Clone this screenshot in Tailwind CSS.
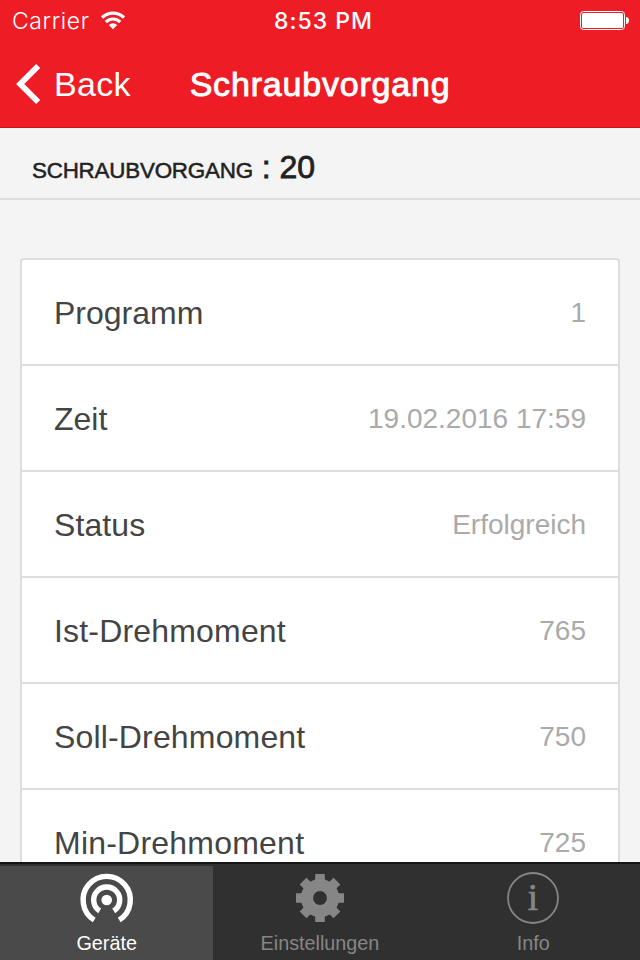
<!DOCTYPE html>
<html lang="de">
  <head>
    <meta charset="UTF-8" />
    <meta name="viewport" content="width=device-width, initial-scale=1.0" />
    <title>Schraubvorgang</title>
    <script src="https://cdn.jsdelivr.net/npm/@tailwindcss/browser@4"></script>
  </head>

  <body class="bg-[#f4f4f4] font-['Liberation_Sans',Arial,sans-serif]">
    <div class="flex flex-col w-[640px] h-[960px] overflow-hidden">
      <!-- Header -->
      <header class="h-32 shrink-0 bg-[#ee1c25] border-b border-[#c9151d] text-white">
        <!-- Status bar -->
        <div class="grid grid-cols-[213px_214px_1fr] items-center h-10 pr-[11px] font-['Inter',sans-serif] text-[23px]">
          <div class="flex items-center gap-[11px] pl-3">
            <span class="pt-0.5 font-light tracking-[0.6px]">Carrier</span>
            <svg class="w-6 h-5" viewBox="0 0 24 20" fill="none" stroke="currentColor" stroke-width="3.2">
              <path d="M1 7.5a15.8 15.8 0 0 1 22 0" />
              <path d="M4.8 12a10.2 10.2 0 0 1 14.4 0" />
              <path d="M12 19.2l-4.2-4.2a6.2 6.2 0 0 1 8.4 0z" fill="currentColor" stroke="none" />
            </svg>
          </div>
          <span class="pt-0.5 pl-[7px] text-center font-medium tracking-[1px] whitespace-nowrap">8:53 PM</span>
          <svg class="justify-self-end w-[49px] h-5" viewBox="0 0 49 20">
            <rect x="0.5" y="1.5" width="44" height="18" rx="3" fill="none" stroke="currentColor" />
            <rect x="2" y="3" width="41" height="15" rx="1.5" fill="currentColor" />
            <path d="M46 7c4 0 4 7 0 7z" fill="currentColor" />
          </svg>
        </div>
        <!-- Nav bar -->
        <div class="grid grid-cols-[160px_320px_160px] items-center h-[88px]">
          <a href="#" class="flex items-center pl-4">
            <svg class="w-[26px] h-10" viewBox="0 0 26 40" fill="none" stroke="currentColor" stroke-width="5.8">
              <path d="M22.2 2L4.2 20l18 18" />
            </svg>
            <span class="ml-3 text-[34px] leading-10 tracking-[0.3px]">Back</span>
          </a>
          <h1 class="text-center text-[34px] leading-10 tracking-[0.8px] whitespace-nowrap [-webkit-text-stroke:0.9px]">Schraubvorgang</h1>
        </div>
      </header>

      <!-- Heading -->
      <div class="h-[72px] shrink-0 pl-8 pt-[19px] border-b-2 border-[#dddddd] text-[#222222]">
        <h2 class="text-[32px] leading-10 whitespace-nowrap [-webkit-text-stroke:0.8px]"><span class="text-[22.4px] tracking-[-0.22px] [-webkit-text-stroke:0.5px]">SCHRAUBVORGANG</span> : 20</h2>
      </div>

      <!-- Details -->
      <main class="flex-1 min-h-0 overflow-hidden px-5 pt-[58px]">
        <ul class="bg-white border-2 border-[#dddddd] rounded divide-y-2 divide-[#dddddd] text-[32px] text-[#444444]">
          <li class="flex items-center justify-between h-[106px] px-8">
            <span class="pt-0.5">Programm</span>
            <span class="pt-0.5 text-[28px] text-[#aaaaaa]">1</span>
          </li>
          <li class="flex items-center justify-between h-[106px] px-8">
            <span class="pt-0.5">Zeit</span>
            <span class="pt-0.5 text-[28px] text-[#aaaaaa]">19.02.2016 17:59</span>
          </li>
          <li class="flex items-center justify-between h-[106px] px-8">
            <span class="pt-0.5 tracking-[0.1px]">Status</span>
            <span class="pt-0.5 text-[28px] text-[#aaaaaa]">Erfolgreich</span>
          </li>
          <li class="flex items-center justify-between h-[106px] px-8">
            <span class="pt-0.5 tracking-[0.18px]">Ist-Drehmoment</span>
            <span class="pt-0.5 text-[28px] text-[#aaaaaa]">765</span>
          </li>
          <li class="flex items-center justify-between h-[106px] px-8">
            <span class="pt-0.5 tracking-[0.16px]">Soll-Drehmoment</span>
            <span class="pt-0.5 text-[28px] text-[#aaaaaa]">750</span>
          </li>
          <li class="flex items-center justify-between h-[104px] px-8">
            <span class="pt-0.5 tracking-[0.22px]">Min-Drehmoment</span>
            <span class="pt-0.5 text-[28px] text-[#aaaaaa]">725</span>
          </li>
        </ul>
      </main>

      <!-- Tabs -->
      <nav class="grid grid-cols-3 h-[98px] shrink-0 pt-0.5 border-t-2 border-[#151515] bg-[#303030] text-[19.8px] text-[#868686]">
        <a href="#" class="flex flex-col items-center bg-[#4a4a4a] text-white">
          <svg class="w-[60px] h-16" viewBox="0 0 60 64" fill="none" stroke="currentColor" stroke-width="5.4">
            <path d="M17.2 54a23.6 23.6 0 1 1 25 0" />
            <path d="M22.7 44.9a13 13 0 1 1 14 0" />
            <circle cx="29.7" cy="34" r="5.3" fill="currentColor" stroke="none" />
          </svg>
          <span class="leading-[26px]">Geräte</span>
        </a>
        <a href="#" class="flex flex-col items-center">
          <svg class="w-[60px] h-16" viewBox="0 0 60 64" fill="none" stroke="currentColor">
            <circle cx="30" cy="32" r="13" stroke-width="12.2" />
            <g fill="currentColor" stroke="none">
              <path id="tooth" d="M25.2 8h9.6v5l1.2 3h-12l1.2-3z" />
              <use href="#tooth" transform="rotate(45 30 32)" />
              <use href="#tooth" transform="rotate(90 30 32)" />
              <use href="#tooth" transform="rotate(135 30 32)" />
              <use href="#tooth" transform="rotate(180 30 32)" />
              <use href="#tooth" transform="rotate(225 30 32)" />
              <use href="#tooth" transform="rotate(270 30 32)" />
              <use href="#tooth" transform="rotate(315 30 32)" />
            </g>
          </svg>
          <span class="leading-[26px]">Einstellungen</span>
        </a>
        <a href="#" class="flex flex-col items-center">
          <svg class="w-[60px] h-16" viewBox="0 0 60 64">
            <circle cx="30" cy="32" r="25" fill="none" stroke="currentColor" stroke-width="1.8" />
            <text x="30" y="44" text-anchor="middle" font-size="37" fill="currentColor" stroke="currentColor" stroke-width="0.7" class="font-['Liberation_Serif',serif]">i</text>
          </svg>
          <span class="leading-[26px]">Info</span>
        </a>
      </nav>
    </div>
  </body>
</html>
